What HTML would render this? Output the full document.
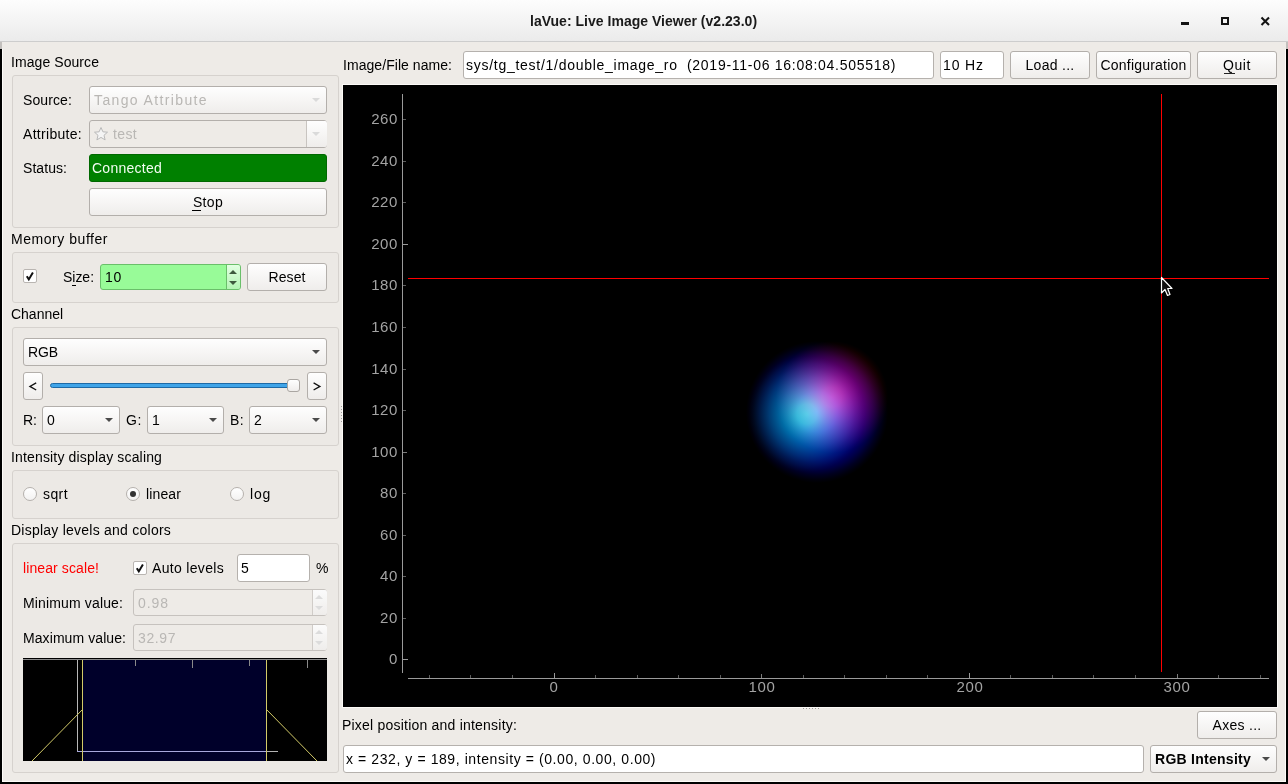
<!DOCTYPE html>
<html><head><meta charset="utf-8"><style>
html,body{margin:0;padding:0;}
body{width:1288px;height:784px;position:relative;overflow:hidden;background:#eeebe7;font-family:"Liberation Sans",sans-serif;}
body>div,body>svg{position:absolute;}
.t{white-space:pre;will-change:transform;}
</style></head><body>
<div style="left:0px;top:0px;width:1288px;height:41px;background:linear-gradient(#fdfdfd,#ebebeb);"></div>
<div style="left:0px;top:41px;width:1288px;height:1px;background:#cdcdcd;"></div>
<div class="t" style="left:530px;top:12.15px;font-size:14px;line-height:18px;color:#1a1a1a;letter-spacing:0.018px;font-weight:bold;">laVue: Live Image Viewer (v2.23.0)</div>
<div style="left:1181px;top:22px;width:8px;height:3px;background:#141414;"></div>
<div style="left:1221px;top:17px;width:8px;height:8px;box-sizing:border-box;border:2px solid #141414;"></div>
<svg style="left:1260px;top:16px" width="11" height="11" viewBox="0 0 11 11"><path d="M1.5 1.5L9 9M9 1.5L1.5 9" stroke="#141414" stroke-width="2.1"/></svg>
<div style="left:0px;top:42px;width:1288px;height:742px;background:#eeebe7;"></div>
<div style="left:0px;top:42px;width:2px;height:7px;background:#c3c0bd;"></div>
<div style="left:0px;top:49px;width:2px;height:735px;background:#000;"></div>
<div style="left:1286px;top:42px;width:2px;height:7px;background:#c3c0bd;"></div>
<div style="left:1286px;top:49px;width:2px;height:735px;background:#000;"></div>
<div style="left:0px;top:782px;width:1288px;height:2px;background:#000;"></div>
<div style="left:2px;top:49px;width:1px;height:733px;background:#fdfbf8;"></div>
<div style="left:1285px;top:49px;width:1px;height:733px;background:#fdfbf8;"></div>
<div style="left:2px;top:781px;width:1284px;height:1px;background:#fdfbf8;"></div>
<div class="t" style="left:11px;top:53.15px;font-size:14px;line-height:18px;color:#000;letter-spacing:0.073px;">Image Source</div>
<div style="left:12px;top:75px;width:327px;height:153px;box-sizing:border-box;border:1px solid #d6d2ce;border-radius:3px;background:#ece9e5;"></div>
<div class="t" style="left:23px;top:91.15px;font-size:14px;line-height:18px;color:#000;letter-spacing:0.109px;">Source:</div>
<div style="left:89px;top:86px;width:238px;height:28px;box-sizing:border-box;border:1px solid #b3afab;border-radius:3px;background:linear-gradient(#fefefe,#efedeb);"></div>
<div class="t" style="left:94px;top:91.15px;font-size:14px;line-height:18px;color:#b9b7b4;letter-spacing:1.375px;">Tango Attribute</div>
<div style="left:312.0px;top:98.0px;width:0;height:0;border-left:4.0px solid transparent;border-right:4.0px solid transparent;border-top:4px solid #dadada;"></div>
<div class="t" style="left:23px;top:125.15px;font-size:14px;line-height:18px;color:#000;letter-spacing:0.298px;">Attribute:</div>
<div style="left:89px;top:120px;width:238px;height:28px;box-sizing:border-box;border:1px solid #b3afab;border-radius:3px;background:#eeebe7;"></div>
<div style="left:306px;top:121px;width:20px;height:26px;background:linear-gradient(#fefefe,#efedeb);border-left:1px solid #c8c4c0;border-radius:0 2px 2px 0;"></div>
<div style="left:312.0px;top:132.0px;width:0;height:0;border-left:4.0px solid transparent;border-right:4.0px solid transparent;border-top:4px solid #dadada;"></div>
<svg style="left:93px;top:126px" width="16" height="16" viewBox="0 0 16 16"><path d="M8 1.5L9.9 5.8L14.5 6.2L11 9.3L12.1 13.9L8 11.4L3.9 13.9L5 9.3L1.5 6.2L6.1 5.8Z" fill="#f4f4f4" stroke="#b9b9b9" stroke-width="1"/></svg>
<div class="t" style="left:113px;top:125.15px;font-size:14px;line-height:18px;color:#b9b7b4;letter-spacing:0.359px;">test</div>
<div class="t" style="left:23px;top:159.15px;font-size:14px;line-height:18px;color:#000;letter-spacing:0.060px;">Status:</div>
<div style="left:89px;top:154px;width:238px;height:28px;box-sizing:border-box;border:1px solid #006800;border-radius:3px;background:#008000;"></div>
<div class="t" style="left:92px;top:159.15px;font-size:14px;line-height:18px;color:#f2fcf2;letter-spacing:0.257px;">Connected</div>
<div style="left:89px;top:188px;width:238px;height:28px;box-sizing:border-box;border:1px solid #b3afab;border-radius:3px;background:linear-gradient(#fefefe,#efedeb);"></div>
<div class="t" style="left:89px;top:193.15px;font-size:14px;line-height:18px;color:#000;letter-spacing:0.301px;width:238px;text-align:center;">Stop</div>
<div style="left:192px;top:210px;width:9px;height:1px;background:#000;"></div>
<div class="t" style="left:11px;top:230.15px;font-size:14px;line-height:18px;color:#000;letter-spacing:0.542px;">Memory buffer</div>
<div style="left:12px;top:252px;width:327px;height:51px;box-sizing:border-box;border:1px solid #d6d2ce;border-radius:3px;background:#ece9e5;"></div>
<div style="left:23px;top:269px;width:14px;height:14px;box-sizing:border-box;border:1px solid #b9b5b1;border-radius:2px;background:#fff;"></div>
<svg style="left:23px;top:269px" width="14" height="14" viewBox="0 0 14 14"><path d="M3.8 7.2L5.8 10.4L9.9 3.4" fill="none" stroke="#111" stroke-width="2"/></svg>
<div class="t" style="left:63px;top:268.15px;font-size:14px;line-height:18px;color:#000;letter-spacing:-0.025px;">Size:</div>
<div style="left:72px;top:285px;width:4px;height:1px;background:#000;"></div>
<div style="left:100px;top:264px;width:141px;height:26px;box-sizing:border-box;border:1px solid #6abf6a;border-radius:3px;background:#98fb98;"></div>
<div style="left:226px;top:265px;width:14px;height:24px;box-sizing:border-box;border-left:1px solid #6abf6a;background:linear-gradient(#e2ffe2,#b4f6b4);border-radius:0 2px 2px 0;"></div>
<div style="left:229.0px;top:270.0px;width:0;height:0;border-left:4.0px solid transparent;border-right:4.0px solid transparent;border-bottom:4px solid #3e5a3e;"></div>
<div style="left:229.0px;top:281.0px;width:0;height:0;border-left:4.0px solid transparent;border-right:4.0px solid transparent;border-top:4px solid #3e5a3e;"></div>
<div class="t" style="left:105px;top:268.15px;font-size:14px;line-height:18px;color:#000;letter-spacing:0.719px;">10</div>
<div style="left:247px;top:263px;width:80px;height:28px;box-sizing:border-box;border:1px solid #b3afab;border-radius:3px;background:linear-gradient(#fefefe,#efedeb);"></div>
<div class="t" style="left:247px;top:268.15px;font-size:14px;line-height:18px;color:#000;letter-spacing:0.087px;width:80px;text-align:center;">Reset</div>
<div class="t" style="left:11px;top:305.15px;font-size:14px;line-height:18px;color:#000;letter-spacing:-0.018px;">Channel</div>
<div style="left:12px;top:327px;width:327px;height:119px;box-sizing:border-box;border:1px solid #d6d2ce;border-radius:3px;background:#ece9e5;"></div>
<div style="left:23px;top:338px;width:304px;height:28px;box-sizing:border-box;border:1px solid #b3afab;border-radius:3px;background:linear-gradient(#fefefe,#efedeb);"></div>
<div class="t" style="left:28px;top:343.15px;font-size:14px;line-height:18px;color:#000;letter-spacing:-0.115px;">RGB</div>
<div style="left:312.0px;top:350.0px;width:0;height:0;border-left:4.0px solid transparent;border-right:4.0px solid transparent;border-top:4px solid #4a4a4a;"></div>
<div style="left:23px;top:372px;width:20px;height:28px;box-sizing:border-box;border:1px solid #b3afab;border-radius:3px;background:linear-gradient(#fefefe,#efedeb);"></div>
<svg style="left:27px;top:379px" width="12" height="14" viewBox="0 0 12 14"><path d="M9.2 3.9L2.9 7.4L9.2 11" fill="none" stroke="#111" stroke-width="1.3"/></svg>
<div style="left:307px;top:372px;width:20px;height:28px;box-sizing:border-box;border:1px solid #b3afab;border-radius:3px;background:linear-gradient(#fefefe,#efedeb);"></div>
<svg style="left:312px;top:379px" width="12" height="14" viewBox="0 0 12 14"><path d="M1.6 3.9L7.9 7.4L1.6 11" fill="none" stroke="#111" stroke-width="1.3"/></svg>
<div style="left:50px;top:383px;width:240px;height:5px;box-sizing:border-box;border:1px solid #1e6aa6;border-radius:3px;background:#3fa4e8;"></div>
<div style="left:287px;top:379px;width:13px;height:13px;box-sizing:border-box;border:1px solid #aaa6a2;border-radius:3px;background:linear-gradient(#fefefe,#efedeb);"></div>
<div class="t" style="left:23px;top:411.15px;font-size:14px;line-height:18px;color:#000;">R:</div>
<div style="left:42px;top:406px;width:78px;height:28px;box-sizing:border-box;border:1px solid #b3afab;border-radius:3px;background:linear-gradient(#fefefe,#efedeb);"></div>
<div class="t" style="left:47px;top:411.15px;font-size:14px;line-height:18px;color:#000;">0</div>
<div style="left:105.0px;top:418.0px;width:0;height:0;border-left:4.0px solid transparent;border-right:4.0px solid transparent;border-top:4px solid #4a4a4a;"></div>
<div class="t" style="left:126px;top:411.15px;font-size:14px;line-height:18px;color:#000;letter-spacing:0.609px;">G:</div>
<div style="left:147px;top:406px;width:77px;height:28px;box-sizing:border-box;border:1px solid #b3afab;border-radius:3px;background:linear-gradient(#fefefe,#efedeb);"></div>
<div class="t" style="left:152px;top:411.15px;font-size:14px;line-height:18px;color:#000;">1</div>
<div style="left:209.0px;top:418.0px;width:0;height:0;border-left:4.0px solid transparent;border-right:4.0px solid transparent;border-top:4px solid #4a4a4a;"></div>
<div class="t" style="left:230px;top:411.15px;font-size:14px;line-height:18px;color:#000;letter-spacing:0.383px;">B:</div>
<div style="left:249px;top:406px;width:78px;height:28px;box-sizing:border-box;border:1px solid #b3afab;border-radius:3px;background:linear-gradient(#fefefe,#efedeb);"></div>
<div class="t" style="left:254px;top:411.15px;font-size:14px;line-height:18px;color:#000;">2</div>
<div style="left:312.0px;top:418.0px;width:0;height:0;border-left:4.0px solid transparent;border-right:4.0px solid transparent;border-top:4px solid #4a4a4a;"></div>
<div class="t" style="left:11px;top:448.15px;font-size:14px;line-height:18px;color:#000;letter-spacing:0.159px;">Intensity display scaling</div>
<div style="left:12px;top:470px;width:327px;height:49px;box-sizing:border-box;border:1px solid #d6d2ce;border-radius:3px;background:#ece9e5;"></div>
<div style="left:23px;top:487px;width:14px;height:14px;box-sizing:border-box;border:1px solid #b5b1ad;border-radius:50%;background:linear-gradient(#fff,#f3f2f1);"></div>
<div class="t" style="left:43px;top:485.15px;font-size:14px;line-height:18px;color:#000;letter-spacing:0.418px;">sqrt</div>
<div style="left:126px;top:487px;width:14px;height:14px;box-sizing:border-box;border:1px solid #b5b1ad;border-radius:50%;background:linear-gradient(#fff,#f3f2f1);"></div>
<div style="left:130px;top:491px;width:6px;height:6px;border-radius:50%;background:#333;"></div>
<div class="t" style="left:146px;top:485.15px;font-size:14px;line-height:18px;color:#000;letter-spacing:0.130px;">linear</div>
<div style="left:230px;top:487px;width:14px;height:14px;box-sizing:border-box;border:1px solid #b5b1ad;border-radius:50%;background:linear-gradient(#fff,#f3f2f1);"></div>
<div class="t" style="left:250px;top:485.15px;font-size:14px;line-height:18px;color:#000;letter-spacing:0.776px;">log</div>
<div class="t" style="left:11px;top:521.15px;font-size:14px;line-height:18px;color:#000;letter-spacing:0.239px;">Display levels and colors</div>
<div style="left:12px;top:543px;width:327px;height:230px;box-sizing:border-box;border:1px solid #d6d2ce;border-radius:3px;background:#ece9e5;"></div>
<div class="t" style="left:23px;top:559.15px;font-size:14px;line-height:18px;color:#ff0000;letter-spacing:0.102px;">linear scale!</div>
<div style="left:133px;top:561px;width:14px;height:14px;box-sizing:border-box;border:1px solid #b9b5b1;border-radius:2px;background:#fff;"></div>
<svg style="left:133px;top:561px" width="14" height="14" viewBox="0 0 14 14"><path d="M3.8 7.2L5.8 10.4L9.9 3.4" fill="none" stroke="#111" stroke-width="2"/></svg>
<div class="t" style="left:152px;top:559.15px;font-size:14px;line-height:18px;color:#000;letter-spacing:0.321px;">Auto levels</div>
<div style="left:237px;top:554px;width:73px;height:28px;box-sizing:border-box;border:1px solid #b5b1ad;border-radius:3px;background:#fff;"></div>
<div class="t" style="left:241px;top:559.15px;font-size:14px;line-height:18px;color:#000;">5</div>
<div class="t" style="left:316px;top:559.15px;font-size:14px;line-height:18px;color:#000;">%</div>
<div class="t" style="left:23px;top:594.15px;font-size:14px;line-height:18px;color:#000;letter-spacing:0.144px;">Minimum value:</div>
<div style="left:133px;top:589px;width:194px;height:27px;box-sizing:border-box;border:1px solid #c6c2be;border-radius:3px;background:#eeebe7;"></div>
<div style="left:312px;top:590px;width:14px;height:25px;border-left:1px solid #d0ccc8;background:linear-gradient(#fbfbfb,#efedeb);border-radius:0 2px 2px 0;"></div>
<div style="left:315.0px;top:595.0px;width:0;height:0;border-left:4.0px solid transparent;border-right:4.0px solid transparent;border-bottom:4px solid #dcdcdc;"></div>
<div style="left:315.0px;top:606.0px;width:0;height:0;border-left:4.0px solid transparent;border-right:4.0px solid transparent;border-top:4px solid #dcdcdc;"></div>
<div class="t" style="left:138px;top:594.15px;font-size:14px;line-height:18px;color:#b9b7b4;letter-spacing:0.941px;">0.98</div>
<div class="t" style="left:23px;top:629.15px;font-size:14px;line-height:18px;color:#000;letter-spacing:0.080px;">Maximum value:</div>
<div style="left:133px;top:624px;width:194px;height:27px;box-sizing:border-box;border:1px solid #c6c2be;border-radius:3px;background:#eeebe7;"></div>
<div style="left:312px;top:625px;width:14px;height:25px;border-left:1px solid #d0ccc8;background:linear-gradient(#fbfbfb,#efedeb);border-radius:0 2px 2px 0;"></div>
<div style="left:315.0px;top:630.0px;width:0;height:0;border-left:4.0px solid transparent;border-right:4.0px solid transparent;border-bottom:4px solid #dcdcdc;"></div>
<div style="left:315.0px;top:641.0px;width:0;height:0;border-left:4.0px solid transparent;border-right:4.0px solid transparent;border-top:4px solid #dcdcdc;"></div>
<div class="t" style="left:138px;top:629.15px;font-size:14px;line-height:18px;color:#b9b7b4;letter-spacing:0.597px;">32.97</div>
<svg style="left:23px;top:658px" width="304" height="103" viewBox="0 0 304 103">
<rect x="0" y="0" width="304" height="103" fill="#000"/>
<rect x="60" y="2" width="183" height="101" fill="#00002a"/>
<line x1="0" y1="1.5" x2="304" y2="1.5" stroke="#8a8a8a" stroke-width="1"/>
<line x1="54.5" y1="2" x2="54.5" y2="93" stroke="#b8b8b8" stroke-width="1"/>
<line x1="54" y1="93.5" x2="243" y2="93.5" stroke="#a8a8dc" stroke-width="1"/><line x1="243" y1="93.5" x2="255" y2="93.5" stroke="#b4b4b4" stroke-width="1"/>
<line x1="59.5" y1="2" x2="59.5" y2="103" stroke="#d2ca68" stroke-width="1"/>
<line x1="243.5" y1="2" x2="243.5" y2="103" stroke="#d2ca68" stroke-width="1"/>
<line x1="9" y1="103" x2="60" y2="51" stroke="#d2ca68" stroke-width="1"/>
<line x1="243" y1="51" x2="294" y2="103" stroke="#d2ca68" stroke-width="1"/>
<line x1="112.5" y1="2" x2="112.5" y2="8" stroke="#8a8a8a"/>
<line x1="169.5" y1="2" x2="169.5" y2="10" stroke="#8a8a8a"/>
<line x1="226.5" y1="2" x2="226.5" y2="8" stroke="#8a8a8a"/>
<line x1="284.5" y1="2" x2="284.5" y2="10" stroke="#8a8a8a"/>
</svg>
<div style="left:341px;top:406px;width:1px;height:1px;background:#9d9a97;"></div>
<div style="left:341px;top:409px;width:1px;height:1px;background:#9d9a97;"></div>
<div style="left:341px;top:412px;width:1px;height:1px;background:#9d9a97;"></div>
<div style="left:341px;top:415px;width:1px;height:1px;background:#9d9a97;"></div>
<div style="left:341px;top:418px;width:1px;height:1px;background:#9d9a97;"></div>
<div style="left:341px;top:421px;width:1px;height:1px;background:#9d9a97;"></div>
<div class="t" style="left:343px;top:56.15px;font-size:14px;line-height:18px;color:#000;letter-spacing:0.056px;">Image/File name:</div>
<div style="left:463px;top:51px;width:471px;height:28px;box-sizing:border-box;border:1px solid #b5b1ad;border-radius:3px;background:#fff;"></div>
<div class="t" style="left:466px;top:56.15px;font-size:14px;line-height:18px;color:#000;letter-spacing:0.726px;">sys/tg_test/1/double_image_ro  (2019-11-06 16:08:04.505518)</div>
<div style="left:940px;top:51px;width:64px;height:28px;box-sizing:border-box;border:1px solid #b5b1ad;border-radius:3px;background:#fff;"></div>
<div class="t" style="left:943px;top:56.15px;font-size:14px;line-height:18px;color:#000;letter-spacing:0.887px;">10 Hz</div>
<div style="left:1010px;top:51px;width:80px;height:28px;box-sizing:border-box;border:1px solid #b3afab;border-radius:3px;background:linear-gradient(#fefefe,#efedeb);"></div>
<div class="t" style="left:1010px;top:56.15px;font-size:14px;line-height:18px;color:#000;letter-spacing:0.289px;width:80px;text-align:center;">Load ...</div>
<div style="left:1096px;top:51px;width:95px;height:28px;box-sizing:border-box;border:1px solid #b3afab;border-radius:3px;background:linear-gradient(#fefefe,#efedeb);"></div>
<div class="t" style="left:1096px;top:56.15px;font-size:14px;line-height:18px;color:#000;letter-spacing:0.213px;width:95px;text-align:center;">Configuration</div>
<div style="left:1197px;top:51px;width:80px;height:28px;box-sizing:border-box;border:1px solid #b3afab;border-radius:3px;background:linear-gradient(#fefefe,#efedeb);"></div>
<div class="t" style="left:1197px;top:56.15px;font-size:14px;line-height:18px;color:#000;letter-spacing:0.582px;width:80px;text-align:center;">Quit</div>
<div style="left:1224px;top:73px;width:11px;height:1px;background:#222;"></div>
<div style="left:342px;top:84px;width:936px;height:624px;background:#fcfaf7;"></div>
<div id="plot" style="left:343px;top:85px;width:934px;height:622px;background:#000;overflow:hidden;"></div>
<div style="left:343px;top:85px;width:934px;height:622px;background:radial-gradient(circle 56px at 489px 312px,rgb(191,0,0) 0px,rgb(173,0,0) 10px,rgb(133,0,0) 20px,rgb(92,0,0) 30px,rgb(56,0,0) 40px,rgb(26,0,0) 48px,rgb(8,0,0) 53px,rgb(0,0,0) 56px),radial-gradient(circle 58px at 464px 329px,rgb(0,204,0) 0px,rgb(0,184,0) 10px,rgb(0,133,0) 20px,rgb(0,89,0) 30px,rgb(0,51,0) 40px,rgb(0,23,0) 48px,rgb(0,5,0) 55px,rgb(0,0,0) 58px),radial-gradient(circle 71px at 474px 327px,rgb(0,0,247) 0px,rgb(0,0,219) 20px,rgb(0,0,168) 35px,rgb(0,0,115) 48px,rgb(0,0,69) 57px,rgb(0,0,33) 63px,rgb(0,0,10) 68px,rgb(0,0,0) 71px),#000;background-blend-mode:screen;"></div>
<div style="left:402px;top:94px;width:1px;height:579px;background:#9a9a9a;"></div>
<div style="left:403px;top:659px;width:5px;height:1px;background:#9a9a9a;"></div>
<div class="t" style="left:347.8px;top:649.0px;width:50px;text-align:right;font-size:15px;line-height:20px;color:#a3a3a3;letter-spacing:0.6px;">0</div>
<div style="left:403px;top:618px;width:3px;height:1px;background:#5c5c5c;"></div>
<div class="t" style="left:347.8px;top:608.0px;width:50px;text-align:right;font-size:15px;line-height:20px;color:#a3a3a3;letter-spacing:0.6px;">20</div>
<div style="left:403px;top:576px;width:3px;height:1px;background:#5c5c5c;"></div>
<div class="t" style="left:347.8px;top:566.0px;width:50px;text-align:right;font-size:15px;line-height:20px;color:#a3a3a3;letter-spacing:0.6px;">40</div>
<div style="left:403px;top:535px;width:3px;height:1px;background:#5c5c5c;"></div>
<div class="t" style="left:347.8px;top:525.0px;width:50px;text-align:right;font-size:15px;line-height:20px;color:#a3a3a3;letter-spacing:0.6px;">60</div>
<div style="left:403px;top:493px;width:3px;height:1px;background:#5c5c5c;"></div>
<div class="t" style="left:347.8px;top:483.0px;width:50px;text-align:right;font-size:15px;line-height:20px;color:#a3a3a3;letter-spacing:0.6px;">80</div>
<div style="left:403px;top:452px;width:4px;height:1px;background:#7c7c7c;"></div>
<div class="t" style="left:347.8px;top:442.0px;width:50px;text-align:right;font-size:15px;line-height:20px;color:#a3a3a3;letter-spacing:0.6px;">100</div>
<div style="left:403px;top:410px;width:3px;height:1px;background:#5c5c5c;"></div>
<div class="t" style="left:347.8px;top:400.0px;width:50px;text-align:right;font-size:15px;line-height:20px;color:#a3a3a3;letter-spacing:0.6px;">120</div>
<div style="left:403px;top:369px;width:3px;height:1px;background:#5c5c5c;"></div>
<div class="t" style="left:347.8px;top:359.0px;width:50px;text-align:right;font-size:15px;line-height:20px;color:#a3a3a3;letter-spacing:0.6px;">140</div>
<div style="left:403px;top:327px;width:3px;height:1px;background:#5c5c5c;"></div>
<div class="t" style="left:347.8px;top:317.0px;width:50px;text-align:right;font-size:15px;line-height:20px;color:#a3a3a3;letter-spacing:0.6px;">160</div>
<div style="left:403px;top:285px;width:3px;height:1px;background:#5c5c5c;"></div>
<div class="t" style="left:347.8px;top:275.0px;width:50px;text-align:right;font-size:15px;line-height:20px;color:#a3a3a3;letter-spacing:0.6px;">180</div>
<div style="left:403px;top:244px;width:5px;height:1px;background:#9a9a9a;"></div>
<div class="t" style="left:347.8px;top:234.0px;width:50px;text-align:right;font-size:15px;line-height:20px;color:#a3a3a3;letter-spacing:0.6px;">200</div>
<div style="left:403px;top:202px;width:3px;height:1px;background:#5c5c5c;"></div>
<div class="t" style="left:347.8px;top:192.0px;width:50px;text-align:right;font-size:15px;line-height:20px;color:#a3a3a3;letter-spacing:0.6px;">220</div>
<div style="left:403px;top:161px;width:3px;height:1px;background:#5c5c5c;"></div>
<div class="t" style="left:347.8px;top:151.0px;width:50px;text-align:right;font-size:15px;line-height:20px;color:#a3a3a3;letter-spacing:0.6px;">240</div>
<div style="left:403px;top:119px;width:3px;height:1px;background:#5c5c5c;"></div>
<div class="t" style="left:347.8px;top:109.0px;width:50px;text-align:right;font-size:15px;line-height:20px;color:#a3a3a3;letter-spacing:0.6px;">260</div>
<div style="left:408px;top:678px;width:861px;height:1px;background:#9a9a9a;"></div>
<div style="left:429px;top:675px;width:1px;height:3px;background:#5c5c5c;"></div>
<div style="left:470px;top:675px;width:1px;height:3px;background:#5c5c5c;"></div>
<div style="left:512px;top:675px;width:1px;height:3px;background:#5c5c5c;"></div>
<div style="left:554px;top:673px;width:1px;height:5px;background:#9a9a9a;"></div>
<div style="left:595px;top:675px;width:1px;height:3px;background:#5c5c5c;"></div>
<div style="left:637px;top:675px;width:1px;height:3px;background:#5c5c5c;"></div>
<div style="left:678px;top:675px;width:1px;height:3px;background:#5c5c5c;"></div>
<div style="left:720px;top:675px;width:1px;height:3px;background:#5c5c5c;"></div>
<div style="left:761px;top:674px;width:1px;height:4px;background:#7c7c7c;"></div>
<div style="left:803px;top:675px;width:1px;height:3px;background:#5c5c5c;"></div>
<div style="left:844px;top:675px;width:1px;height:3px;background:#5c5c5c;"></div>
<div style="left:886px;top:675px;width:1px;height:3px;background:#5c5c5c;"></div>
<div style="left:927px;top:675px;width:1px;height:3px;background:#5c5c5c;"></div>
<div style="left:969px;top:673px;width:1px;height:5px;background:#9a9a9a;"></div>
<div style="left:1010px;top:675px;width:1px;height:3px;background:#5c5c5c;"></div>
<div style="left:1052px;top:675px;width:1px;height:3px;background:#5c5c5c;"></div>
<div style="left:1093px;top:675px;width:1px;height:3px;background:#5c5c5c;"></div>
<div style="left:1135px;top:675px;width:1px;height:3px;background:#5c5c5c;"></div>
<div style="left:1177px;top:674px;width:1px;height:4px;background:#7c7c7c;"></div>
<div style="left:1218px;top:675px;width:1px;height:3px;background:#5c5c5c;"></div>
<div style="left:1260px;top:675px;width:1px;height:3px;background:#5c5c5c;"></div>
<div class="t" style="left:504.3px;top:677.0px;width:100px;text-align:center;font-size:15px;line-height:20px;color:#a3a3a3;letter-spacing:0.6px;">0</div>
<div class="t" style="left:712.0px;top:677.0px;width:100px;text-align:center;font-size:15px;line-height:20px;color:#a3a3a3;letter-spacing:0.6px;">100</div>
<div class="t" style="left:919.6px;top:677.0px;width:100px;text-align:center;font-size:15px;line-height:20px;color:#a3a3a3;letter-spacing:0.6px;">200</div>
<div class="t" style="left:1127.3px;top:677.0px;width:100px;text-align:center;font-size:15px;line-height:20px;color:#a3a3a3;letter-spacing:0.6px;">300</div>
<div style="left:1161px;top:94px;width:1px;height:578px;background:#ff0000;"></div>
<div style="left:408px;top:278px;width:861px;height:1px;background:#ff0000;"></div>
<svg style="left:1160px;top:276px" width="14" height="22" viewBox="0 0 14 22"><path d="M1.5 1.5L1.5 17L5 13.5L7.5 19.5L10 18.5L7.7 12.5L12 12.5Z" fill="#111" stroke="#fff" stroke-width="1.2" stroke-linejoin="round"/></svg>
<div class="t" style="left:342px;top:716.15px;font-size:14px;line-height:18px;color:#000;letter-spacing:0.213px;">Pixel position and intensity:</div>
<div style="left:1197px;top:711px;width:80px;height:28px;box-sizing:border-box;border:1px solid #b3afab;border-radius:3px;background:linear-gradient(#fefefe,#efedeb);"></div>
<div class="t" style="left:1197px;top:716.15px;font-size:14px;line-height:18px;color:#000;letter-spacing:0.289px;width:80px;text-align:center;">Axes ...</div>
<div style="left:343px;top:745px;width:801px;height:28px;box-sizing:border-box;border:1px solid #b5b1ad;border-radius:3px;background:#fff;"></div>
<div class="t" style="left:346px;top:750.15px;font-size:14px;line-height:18px;color:#000;letter-spacing:0.583px;">x = 232, y = 189, intensity = (0.00, 0.00, 0.00)</div>
<div style="left:1150px;top:745px;width:127px;height:28px;box-sizing:border-box;border:1px solid #b3afab;border-radius:3px;background:linear-gradient(#fefefe,#efedeb);"></div>
<div class="t" style="left:1155px;top:750.15px;font-size:14px;line-height:18px;color:#000;letter-spacing:0.267px;font-weight:bold;">RGB Intensity</div>
<div style="left:1262.0px;top:757.0px;width:0;height:0;border-left:4.0px solid transparent;border-right:4.0px solid transparent;border-top:4px solid #4a4a4a;"></div>
<div style="left:803px;top:708px;width:1px;height:1px;background:#9d9a97;"></div>
<div style="left:806px;top:708px;width:1px;height:1px;background:#9d9a97;"></div>
<div style="left:809px;top:708px;width:1px;height:1px;background:#9d9a97;"></div>
<div style="left:812px;top:708px;width:1px;height:1px;background:#9d9a97;"></div>
<div style="left:815px;top:708px;width:1px;height:1px;background:#9d9a97;"></div>
<div style="left:818px;top:708px;width:1px;height:1px;background:#9d9a97;"></div>
</body></html>
